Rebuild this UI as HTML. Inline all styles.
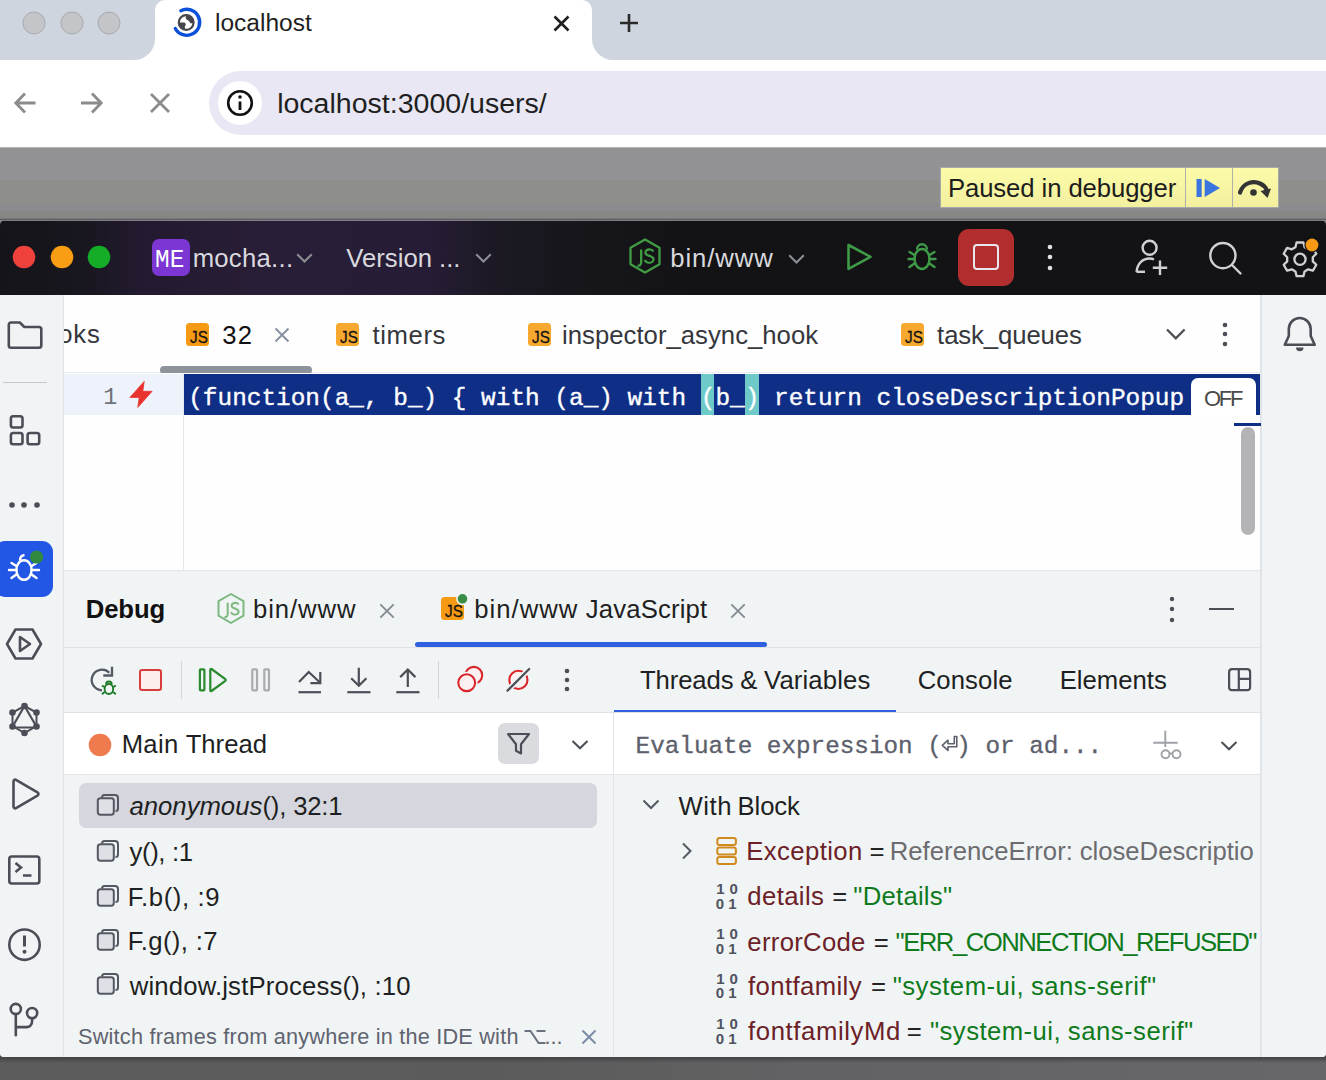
<!DOCTYPE html>
<html><head><meta charset="utf-8"><style>
html,body{margin:0;padding:0;}
body{width:1326px;height:1080px;position:relative;overflow:hidden;background:#4c4c4e;font-family:"Liberation Sans",sans-serif;}
svg{display:block;overflow:visible;}
</style></head><body>
<div style="position:absolute;left:0px;top:0px;width:1326px;height:60px;background:#cfd5de;"></div>
<svg style="position:absolute;left:20.5px;top:10px;" width="26" height="26" viewBox="0 0 26 26" fill="none"><circle cx="13" cy="13" r="11" fill="#c4c5c8" stroke="#a9aaad" stroke-width="1"/></svg>
<svg style="position:absolute;left:58.5px;top:10px;" width="26" height="26" viewBox="0 0 26 26" fill="none"><circle cx="13" cy="13" r="11" fill="#c4c5c8" stroke="#a9aaad" stroke-width="1"/></svg>
<svg style="position:absolute;left:95.6px;top:10px;" width="26" height="26" viewBox="0 0 26 26" fill="none"><circle cx="13" cy="13" r="11" fill="#c4c5c8" stroke="#a9aaad" stroke-width="1"/></svg>
<div style="position:absolute;left:134px;top:38px;width:21px;height:22px;background:#fff;"></div>
<div style="position:absolute;left:134px;top:38px;width:21px;height:22px;background:#cfd5de;border-bottom-right-radius:21px;"></div>
<div style="position:absolute;left:592px;top:38px;width:21px;height:22px;background:#fff;"></div>
<div style="position:absolute;left:592px;top:38px;width:21px;height:22px;background:#cfd5de;border-bottom-left-radius:21px;"></div>
<div style="position:absolute;left:155px;top:0px;width:437px;height:60px;background:#fff;border-radius:10px 10px 0 0;"></div>
<svg style="position:absolute;left:170px;top:6px;" width="34" height="34" viewBox="0 0 34 34" fill="none">
      <path d="M10.88 4.68 A13 13 0 1 1 5.28 22.50" stroke="#0b50d8" stroke-width="3.4" stroke-linecap="round"/>
      <circle cx="16.2" cy="16.5" r="7.4" stroke="#45464b" stroke-width="2.2" fill="#fff"/>
      <path d="M17 9 C15.5 10.5 15 12.5 17 13.8 C18.8 14.8 19.8 15.8 20.3 17.2 L23.8 17.2 A7.6 7.6 0 0 0 17 9Z" fill="#45464b"/>
      <path d="M8.6 16.6 L13.6 16.6 C15.6 16.8 16.2 18.3 15.4 19.6 C14.6 20.8 14.6 22.5 15.6 24 A7.6 7.6 0 0 1 8.6 16.6Z" fill="#45464b"/>
    </svg>
<div style="position:absolute;left:215.01px;top:10.66px;font:normal 400 24.52px/1 'Liberation Sans';color:#1f1f1f;white-space:pre;">localhost</div>
<svg style="position:absolute;left:552px;top:14px;" width="19" height="19" viewBox="0 0 19 19" fill="none"><path d="M2.5 2.5 L16.5 16.5 M16.5 2.5 L2.5 16.5" stroke="#1f1f1f" stroke-width="2.6" stroke-linecap="butt"/></svg>
<svg style="position:absolute;left:618px;top:12px;" width="22" height="22" viewBox="0 0 22 22" fill="none"><path d="M11 2 V20 M2 11 H20" stroke="#2a2a2a" stroke-width="2.6"/></svg>
<div style="position:absolute;left:0px;top:60px;width:1326px;height:87px;background:#ffffff;"></div>
<svg style="position:absolute;left:12px;top:90px;" width="26" height="26" viewBox="0 0 26 26" fill="none"><path d="M23.5 13 H4 M13 3.5 L3.8 13 L13 22.5" stroke="#8b8b8b" stroke-width="2.8" stroke-linejoin="miter"/></svg>
<svg style="position:absolute;left:79px;top:90px;" width="26" height="26" viewBox="0 0 26 26" fill="none"><path d="M2 13 H21.8 M13 3.5 L22.2 13 L13 22.5" stroke="#8b8b8b" stroke-width="2.8" stroke-linejoin="miter"/></svg>
<svg style="position:absolute;left:148px;top:91px;" width="24" height="24" viewBox="0 0 24 24" fill="none"><path d="M3 3 L21 21 M21 3 L3 21" stroke="#8b8b8b" stroke-width="2.8"/></svg>
<div style="position:absolute;left:208.5px;top:71px;width:1200px;height:64px;background:#e8e7f3;border-radius:32px;"></div>
<svg style="position:absolute;left:218px;top:81px;" width="44" height="44" viewBox="0 0 44 44" fill="none"><circle cx="22" cy="22" r="22" fill="#fff"/>
       <circle cx="22" cy="22" r="11.8" stroke="#111" stroke-width="2.6"/>
       <path d="M22 20.5 V29" stroke="#111" stroke-width="2.8"/>
       <circle cx="22" cy="16" r="1.8" fill="#111"/></svg>
<div style="position:absolute;left:277.14px;top:89.44px;font:normal 400 28.54px/1 'Liberation Sans';color:#1f1f1f;white-space:pre;">localhost:3000/users/</div>
<div style="position:absolute;left:0px;top:147px;width:1326px;height:80px;background:linear-gradient(#c8c8ca 0px,#929294 1.5px,#929294 33px,#8e8e8c 33px,#8e8e8c 55.6px,#8c8c8e 55.6px,#8c8c8e 64px,#888886 64px,#868686 71px,#5f5f63 72.5px,#85858a 73.5px);"></div>
<div style="position:absolute;left:0px;top:1050px;width:1326px;height:30px;background:linear-gradient(rgba(60,60,62,1) 0px,rgba(70,70,73,1) 8px,rgba(70,70,73,0) 13px),linear-gradient(90deg,#5c5c5c 0px,#5b5b5b 500px,#626264 800px,#676769 1326px);"></div>
<div style="position:absolute;left:940px;top:167px;width:339px;height:41px;background:linear-gradient(#fbfba8,#f3f0a0);box-sizing:border-box;border:1.5px solid #a8a8a8;"></div>
<div style="position:absolute;left:1184.5px;top:168px;width:1.5px;height:39px;background:#b0b0a8;"></div>
<div style="position:absolute;left:1231.5px;top:168px;width:1.5px;height:39px;background:#b0b0a8;"></div>
<div style="position:absolute;left:947.94px;top:175.96px;font:normal 400 25.70px/1 'Liberation Sans';color:#1d1d1d;white-space:pre;letter-spacing:-0.093px;">Paused in debugger</div>
<svg style="position:absolute;left:1194px;top:176px;" width="30" height="24" viewBox="0 0 30 24" fill="none"><rect x="2.5" y="3" width="5.2" height="18" fill="#3b74dc"/><path d="M10.7 3 L26 12 L10.7 21Z" fill="#3b74dc"/></svg>
<svg style="position:absolute;left:1236px;top:174px;" width="38" height="28" viewBox="0 0 38 28" fill="none"><path d="M4 18.5 C7 9 17 6 24 9.5 C27.5 11 29.5 13.5 30.5 15.5" stroke="#333" stroke-width="4.2" stroke-linecap="round"/>
       <path d="M24.5 17 L35 14.5 L31.5 24Z" fill="#333"/>
       <circle cx="17.5" cy="18.5" r="3.3" fill="#333"/></svg>
<div style="position:absolute;left:0;top:0;width:1326px;height:1080px;clip-path:inset(220.8px 0px 23px 0px round 4px 4px 4px 4px);">
<div style="position:absolute;left:0px;top:220px;width:1326px;height:837px;background:#f1f4f4;"></div>
<div style="position:absolute;left:0px;top:220px;width:1326px;height:75px;background:linear-gradient(90deg,#15141a 0px,#18161e 80px,#231a2f 140px,#291e37 270px,#271c35 430px,#1c1924 490px,#161519 600px,#131316 700px,#131316 1326px);"></div>
<svg style="position:absolute;left:12.3px;top:245.4px;" width="24" height="24" viewBox="0 0 24 24" fill="none"><circle cx="12" cy="12" r="11.3" fill="#f0423d"/></svg>
<svg style="position:absolute;left:50px;top:245.4px;" width="24" height="24" viewBox="0 0 24 24" fill="none"><circle cx="12" cy="12" r="11.3" fill="#f89d14"/></svg>
<svg style="position:absolute;left:87.2px;top:245.4px;" width="24" height="24" viewBox="0 0 24 24" fill="none"><circle cx="12" cy="12" r="11.3" fill="#15ac28"/></svg>
<div style="position:absolute;left:152px;top:238.7px;width:38px;height:37px;background:#7b36d4;border-radius:7px;"></div>
<div style="position:absolute;left:155.27px;top:248.32px;font:normal 400 25.50px/1 'Liberation Mono';color:#ffffff;white-space:pre;transform:scaleX(0.9570);transform-origin:1.53px 0;">ME</div>
<div style="position:absolute;left:192.63px;top:245.85px;font:normal 400 25.70px/1 'Liberation Sans';color:#d8d9de;white-space:pre;letter-spacing:0.279px;">mocha...</div>
<svg style="position:absolute;left:296px;top:252.5px;" width="17" height="10" viewBox="0 0 17 10" fill="none"><path d="M1.2 1.2 L8.5 8.5 L15.8 1.2" stroke="#8c8f96" stroke-width="2"/></svg>
<div style="position:absolute;left:346.27px;top:245.85px;font:normal 400 25.70px/1 'Liberation Sans';color:#d8d9de;white-space:pre;letter-spacing:0.001px;">Version ...</div>
<svg style="position:absolute;left:474.5px;top:252.5px;" width="17" height="10" viewBox="0 0 17 10" fill="none"><path d="M1.2 1.2 L8.5 8.5 L15.8 1.2" stroke="#8c8f96" stroke-width="2"/></svg>
<svg style="position:absolute;left:626px;top:237px;" width="38" height="40" viewBox="0 0 38 40" fill="none"><path d="M19 2.5 L33.5 10.8 V27.2 L19 35.5 L4.5 27.2 V10.8Z" stroke="#3f9c43" stroke-width="2.3" stroke-linejoin="round"/>
      <path d="M15.2 12.5 V25 C15.2 28 13.5 29 11.5 28.5" stroke="#3f9c43" stroke-width="2.3"/>
      <path d="M27.5 14.5 C26.5 12.8 24.5 12.3 22.8 12.5 C20.3 12.8 19.2 14.5 19.6 16.2 C20.1 18.5 23 18.6 25 19.5 C27 20.3 27.8 21.5 27.2 23.5 C26.5 25.6 23.5 26 21.5 25.5 C20 25 19.2 24 18.8 23" stroke="#3f9c43" stroke-width="2.3"/></svg>
<div style="position:absolute;left:670.23px;top:245.55px;font:normal 400 25.70px/1 'Liberation Sans';color:#d8d9de;white-space:pre;letter-spacing:0.921px;">bin/www</div>
<svg style="position:absolute;left:788px;top:253.5px;" width="17" height="10" viewBox="0 0 17 10" fill="none"><path d="M1.2 1.2 L8.5 8.5 L15.8 1.2" stroke="#8c8f96" stroke-width="2"/></svg>
<svg style="position:absolute;left:844px;top:241px;" width="30" height="32" viewBox="0 0 30 32" fill="none"><path d="M4.5 4 L26.5 15.8 L4.5 27.8Z" stroke="#3f9b47" stroke-width="2.6" stroke-linejoin="round"/></svg>
<svg style="position:absolute;left:905px;top:240px;" width="34" height="34" viewBox="0 0 34 34" fill="none"><path d="M12 9.5 C12 6.5 14.3 4.2 17 4.2 C19.7 4.2 22 6.5 22 9.5" stroke="#3f9b47" stroke-width="2.4"/>
      <ellipse cx="17" cy="19" rx="7.5" ry="10" stroke="#3f9b47" stroke-width="2.4"/>
      <path d="M9.5 15 L4.5 12 M24.5 15 L29.5 12 M9.5 19 H3.5 M24.5 19 H30.5 M9.5 23.5 L4.5 27 M24.5 23.5 L29.5 27" stroke="#3f9b47" stroke-width="2.4" stroke-linecap="round"/></svg>
<div style="position:absolute;left:958px;top:229px;width:56px;height:56.5px;background:#b22d2d;border-radius:11px;"></div>
<div style="position:absolute;left:973px;top:244px;width:26px;height:26px;background:transparent;box-sizing:border-box;border:2.4px solid #e8e6ee;border-radius:4px;"></div>
<svg style="position:absolute;left:1046.7px;top:244px;" width="6" height="6" viewBox="0 0 6 6" fill="none"><circle cx="3" cy="3" r="2.3" fill="#dfe1e5"/></svg>
<svg style="position:absolute;left:1046.7px;top:254.39999999999998px;" width="6" height="6" viewBox="0 0 6 6" fill="none"><circle cx="3" cy="3" r="2.3" fill="#dfe1e5"/></svg>
<svg style="position:absolute;left:1046.7px;top:264.6px;" width="6" height="6" viewBox="0 0 6 6" fill="none"><circle cx="3" cy="3" r="2.3" fill="#dfe1e5"/></svg>
<svg style="position:absolute;left:1130px;top:236px;" width="42" height="44" viewBox="0 0 42 44" fill="none"><circle cx="19.6" cy="11.8" r="7" stroke="#cfd1d6" stroke-width="2.4"/>
      <path d="M6.5 35.8 C7.5 27 13 22.5 19.5 22.5 C21.5 22.5 23 23 24 23.5" stroke="#cfd1d6" stroke-width="2.4"/>
      <path d="M6.5 35.8 H15" stroke="#cfd1d6" stroke-width="2.4"/>
      <path d="M30 24.5 V39 M22.8 31.8 H37.2" stroke="#cfd1d6" stroke-width="2.4"/></svg>
<svg style="position:absolute;left:1205px;top:238px;" width="40" height="40" viewBox="0 0 40 40" fill="none"><circle cx="17.9" cy="17.6" r="12.6" stroke="#cfd1d6" stroke-width="2.4"/><path d="M27 27 L35.5 35.5" stroke="#cfd1d6" stroke-width="2.4" stroke-linecap="round"/></svg>
<svg style="position:absolute;left:1280px;top:238px;" width="40" height="40" viewBox="0 0 40 40" fill="none"><path d="M16.6 4.5 H23.4 L24.6 9.2 L28.2 11.3 L32.9 9.9 L36.3 15.8 L32.8 19.2 V23.4 L36.3 26.8 L32.9 32.7 L28.2 31.3 L24.6 33.4 L23.4 38.1 H16.6 L15.4 33.4 L11.8 31.3 L7.1 32.7 L3.7 26.8 L7.2 23.4 V19.2 L3.7 15.8 L7.1 9.9 L11.8 11.3 L15.4 9.2Z" stroke="#cfd1d6" stroke-width="2.3" stroke-linejoin="round"/>
      <circle cx="20" cy="21.3" r="5.6" stroke="#cfd1d6" stroke-width="2.3"/></svg>
<svg style="position:absolute;left:1302px;top:235px;" width="20" height="20" viewBox="0 0 20 20" fill="none"><circle cx="10" cy="10" r="7.6" fill="#131316"/><circle cx="10" cy="10" r="6.4" fill="#f59a12"/></svg>
<div style="position:absolute;left:0px;top:295px;width:63px;height:762px;background:#f1f4f4;"></div>
<div style="position:absolute;left:62.5px;top:295px;width:1.3px;height:762px;background:#e2e2ea;"></div>
<div style="position:absolute;left:1260px;top:295px;width:66px;height:762px;background:#f1f4f4;"></div>
<div style="position:absolute;left:1260px;top:295px;width:1.8px;height:762px;background:#e2e2ea;"></div>
<div style="position:absolute;left:63.5px;top:295px;width:1196.5px;height:78px;background:#fefefe;"></div>
<div style="position:absolute;left:63.5px;top:372px;width:1196.5px;height:1.3px;background:#ebecf0;"></div>
<div style="position:absolute;left:64px;top:295px;width:1196px;height:78px;overflow:hidden;">
<div style="position:absolute;left:-21.03px;top:27.16px;font:normal 400 25.70px/1 'Liberation Sans';color:#35373c;white-space:pre;letter-spacing:0.900px;">ooks</div>
</div>
<div style="position:absolute;left:186px;top:323px;width:22.8px;height:22.8px;background:#f59a12;border-radius:3.5px;"></div>
<div style="position:absolute;left:189.66px;top:330.17px;font:normal 400 15.80px/1 'Liberation Sans';color:#141414;white-space:pre;transform:scaleX(0.9680);transform-origin:0.24px 0;-webkit-text-stroke:0.3px #141414;">JS</div>
<div style="position:absolute;left:222.27px;top:322.96px;font:normal 400 25.70px/1 'Liberation Sans';color:#111;white-space:pre;letter-spacing:1.086px;">32</div>
<svg style="position:absolute;left:271.5px;top:324.5px;" width="20" height="20" viewBox="0 0 20 20" fill="none"><path d="M3.5 3.5 L16.5 16.5 M16.5 3.5 L3.5 16.5" stroke="#8690a0" stroke-width="1.9"/></svg>
<div style="position:absolute;left:336.3px;top:323px;width:22.8px;height:22.8px;background:#f6a92e;border-radius:3.5px;"></div>
<div style="position:absolute;left:339.96px;top:330.17px;font:normal 400 15.80px/1 'Liberation Sans';color:#141414;white-space:pre;transform:scaleX(0.9680);transform-origin:0.24px 0;-webkit-text-stroke:0.3px #141414;">JS</div>
<div style="position:absolute;left:372.61px;top:323.15px;font:normal 400 25.70px/1 'Liberation Sans';color:#35373c;white-space:pre;letter-spacing:0.576px;">timers</div>
<div style="position:absolute;left:528px;top:323px;width:22.8px;height:22.8px;background:#f6a92e;border-radius:3.5px;"></div>
<div style="position:absolute;left:531.66px;top:330.17px;font:normal 400 15.80px/1 'Liberation Sans';color:#141414;white-space:pre;transform:scaleX(0.9680);transform-origin:0.24px 0;-webkit-text-stroke:0.3px #141414;">JS</div>
<div style="position:absolute;left:562.03px;top:323.15px;font:normal 400 25.70px/1 'Liberation Sans';color:#35373c;white-space:pre;letter-spacing:0.024px;">inspector_async_hook</div>
<div style="position:absolute;left:901.3px;top:323px;width:22.8px;height:22.8px;background:#f6a92e;border-radius:3.5px;"></div>
<div style="position:absolute;left:904.96px;top:330.17px;font:normal 400 15.80px/1 'Liberation Sans';color:#141414;white-space:pre;transform:scaleX(0.9680);transform-origin:0.24px 0;-webkit-text-stroke:0.3px #141414;">JS</div>
<div style="position:absolute;left:937.11px;top:323.15px;font:normal 400 25.70px/1 'Liberation Sans';color:#35373c;white-space:pre;letter-spacing:-0.093px;">task_queues</div>
<svg style="position:absolute;left:1164px;top:326px;" width="24" height="16" viewBox="0 0 24 16" fill="none"><path d="M3 3.5 L11.8 12.3 L20.6 3.5" stroke="#4b4e57" stroke-width="2.3"/></svg>
<svg style="position:absolute;left:1219.8px;top:319.9px;" width="10" height="10" viewBox="0 0 10 10" fill="none"><circle cx="5" cy="5" r="2.3" fill="#4b4e57"/></svg>
<svg style="position:absolute;left:1219.8px;top:329.3px;" width="10" height="10" viewBox="0 0 10 10" fill="none"><circle cx="5" cy="5" r="2.3" fill="#4b4e57"/></svg>
<svg style="position:absolute;left:1219.8px;top:338.6px;" width="10" height="10" viewBox="0 0 10 10" fill="none"><circle cx="5" cy="5" r="2.3" fill="#4b4e57"/></svg>
<div style="position:absolute;left:159.5px;top:366px;width:152px;height:7.5px;background:#8e929b;border-radius:4px;"></div>
<div style="position:absolute;left:63.5px;top:373.3px;width:1196.5px;height:197px;background:#fefefe;"></div>
<div style="position:absolute;left:63.5px;top:374px;width:120px;height:40.5px;background:#eef2fb;"></div>
<div style="position:absolute;left:183px;top:374px;width:1.3px;height:196px;background:#e6e7ed;"></div>
<div style="position:absolute;left:63.5px;top:569.5px;width:1196.5px;height:1.3px;background:#e3e5ea;"></div>
<div style="position:absolute;left:103.26px;top:386.14px;font:normal 400 23.50px/1 'Liberation Mono';color:#6f737a;white-space:pre;">1</div>
<svg style="position:absolute;left:128px;top:380px;" width="26" height="29" viewBox="0 0 26 29" fill="none"><path d="M16.2 1.4 L1.9 17.4 H11.2 L9.8 27.4 L24.1 11.3 H14.8Z" fill="#e9332f" stroke="#e9332f" stroke-width="0.8" stroke-linejoin="round"/></svg>
<div style="position:absolute;left:184.3px;top:374px;width:1075.7px;height:40.5px;background:#0f2f87;"></div>
<div style="position:absolute;left:700.9px;top:374px;width:13.5px;height:40.5px;background:#6ecac9;"></div>
<div style="position:absolute;left:744.8px;top:374px;width:14px;height:40.5px;background:#6ecac9;"></div>
<div style="position:absolute;left:184.3px;top:374px;width:1076px;height:41px;overflow:hidden;">
<div style="position:absolute;left:3.90px;top:13.45px;font:normal 400 24.41px/1 'Liberation Mono';color:#ffffff;white-space:pre;-webkit-text-stroke:0.35px #fff;">(function(a_, b_) { with (a_) with (b_) return closeDescriptionPopup</div>
</div>
<div style="position:absolute;left:1191.3px;top:377.7px;width:65.2px;height:37px;background:#ffffff;border-radius:7px 7px 0 0;"></div>
<div style="position:absolute;left:1204.01px;top:387.90px;font:normal 400 22.00px/1 'Liberation Sans';color:#4a4a4a;white-space:pre;letter-spacing:-2.265px;">OFF</div>
<div style="position:absolute;left:1233.5px;top:423px;width:27px;height:3.2px;background:#0f2f87;"></div>
<div style="position:absolute;left:1241px;top:426.5px;width:13.5px;height:108px;background:#b4b4b6;border-radius:7px;"></div>
<svg style="position:absolute;left:4px;top:318px;" width="40" height="33" viewBox="0 0 40 33" fill="none"><path d="M4.8 6.8 C4.8 5.3 5.6 4.5 7.1 4.5 H15.8 L20.3 9 H35 C36.5 9 37.3 9.8 37.3 11.3 V27.5 C37.3 29 36.5 29.8 35 29.8 H7.1 C5.6 29.8 4.8 29 4.8 27.5Z" stroke="#4b4e57" stroke-width="2.6" stroke-linejoin="round"/></svg>
<div style="position:absolute;left:2.5px;top:381.5px;width:44.5px;height:1.8px;background:#c5c8cf;"></div>
<svg style="position:absolute;left:5px;top:410px;" width="40" height="40" viewBox="0 0 40 40" fill="none"><rect x="5.9" y="6.3" width="11.6" height="11.2" rx="2.2" stroke="#4b4e57" stroke-width="2.6"/><rect x="5.9" y="23" width="11.6" height="11.2" rx="2.2" stroke="#4b4e57" stroke-width="2.6"/><rect x="22.6" y="23" width="11.6" height="11.2" rx="2.2" stroke="#4b4e57" stroke-width="2.6"/></svg>
<svg style="position:absolute;left:8px;top:501px;" width="8" height="8" viewBox="0 0 8 8" fill="none"><circle cx="4" cy="4" r="2.8" fill="#4b4e57"/></svg>
<svg style="position:absolute;left:20.3px;top:501px;" width="8" height="8" viewBox="0 0 8 8" fill="none"><circle cx="4" cy="4" r="2.8" fill="#4b4e57"/></svg>
<svg style="position:absolute;left:32.6px;top:501px;" width="8" height="8" viewBox="0 0 8 8" fill="none"><circle cx="4" cy="4" r="2.8" fill="#4b4e57"/></svg>
<div style="position:absolute;left:-6px;top:541px;width:59px;height:56px;background:#2257e6;border-radius:11px;"></div>
<svg style="position:absolute;left:4px;top:548px;" width="40" height="40" viewBox="0 0 40 40" fill="none"><path d="M16 12.5 C16 9.5 17.5 7.3 20.5 7" stroke="#fff" stroke-width="2.4"/>
      <ellipse cx="20" cy="22" rx="7.6" ry="9.8" stroke="#fff" stroke-width="2.4"/>
      <path d="M12.4 18 L7.5 15 M27.6 18 L32.5 15 M12.4 22 H5 M27.6 22 H35 M12.4 26.5 L7.5 30 M27.6 26.5 L32.5 30" stroke="#fff" stroke-width="2.4" stroke-linecap="round"/></svg>
<svg style="position:absolute;left:29px;top:549px;" width="16" height="16" viewBox="0 0 16 16" fill="none"><circle cx="7.6" cy="8" r="6.6" fill="#2f8a3f" stroke="#2257e6" stroke-width="0"/></svg>
<svg style="position:absolute;left:4px;top:624px;" width="40" height="40" viewBox="0 0 40 40" fill="none"><path d="M11.5 5.5 H28.5 L37 20 L28.5 34.5 H11.5 L3 20Z" stroke="#4b4e57" stroke-width="2.6" stroke-linejoin="round"/><path d="M16 13 L26 20 L16 27Z" stroke="#4b4e57" stroke-width="2.6" stroke-linejoin="round"/></svg>
<svg style="position:absolute;left:4px;top:700px;" width="40" height="40" viewBox="0 0 40 40" fill="none"><path d="M20.5 6 L32.5 12.5 V26 L20.5 33 L8.5 26 V12.5Z" stroke="#4b4e57" stroke-width="2"/>
      <path d="M20.5 6 L33 27.5 H8Z" stroke="#4b4e57" stroke-width="2.2" stroke-linejoin="round"/>
      <circle cx="20.5" cy="6" r="3.3" fill="#4b4e57"/><circle cx="32.5" cy="12.5" r="3.3" fill="#4b4e57"/><circle cx="32.5" cy="26.5" r="3.3" fill="#4b4e57"/>
      <circle cx="20.5" cy="33" r="3.3" fill="#4b4e57"/><circle cx="8.5" cy="26.5" r="3.3" fill="#4b4e57"/><circle cx="8.5" cy="12.5" r="3.3" fill="#4b4e57"/></svg>
<svg style="position:absolute;left:4px;top:774px;" width="40" height="40" viewBox="0 0 40 40" fill="none"><path d="M9.5 7.5 C9.5 6 10.8 5.2 12 5.9 L33.5 18.3 C34.8 19.1 34.8 20.9 33.5 21.7 L12 34.1 C10.8 34.8 9.5 34 9.5 32.5Z" stroke="#4b4e57" stroke-width="2.6" stroke-linejoin="round"/></svg>
<svg style="position:absolute;left:4px;top:850px;" width="40" height="40" viewBox="0 0 40 40" fill="none"><rect x="5.3" y="6.5" width="30" height="27" rx="2.5" stroke="#4b4e57" stroke-width="2.6"/><path d="M11.5 13 L17 17.5 L11.5 22 M19 25.5 H27.5" stroke="#4b4e57" stroke-width="2.6"/></svg>
<svg style="position:absolute;left:4px;top:925px;" width="40" height="40" viewBox="0 0 40 40" fill="none"><circle cx="20.5" cy="19.7" r="15.2" stroke="#4b4e57" stroke-width="2.6"/><path d="M20.5 10.5 V21.5" stroke="#4b4e57" stroke-width="3"/><circle cx="20.5" cy="26.8" r="2" fill="#4b4e57"/></svg>
<svg style="position:absolute;left:4px;top:999px;" width="40" height="40" viewBox="0 0 40 40" fill="none"><circle cx="11.8" cy="10" r="5.1" stroke="#4b4e57" stroke-width="2.6"/><circle cx="28.1" cy="14.1" r="5.1" stroke="#4b4e57" stroke-width="2.6"/><path d="M11.8 15.1 V36.3 M11.8 28.1 H22.5 C26 28.1 28.1 25.5 28.1 22 V19.2" stroke="#4b4e57" stroke-width="2.6" stroke-linecap="round"/></svg>
<svg style="position:absolute;left:1280px;top:315px;" width="40" height="42" viewBox="0 0 40 42" fill="none"><path d="M4.8 29.8 L8.8 21 V13.95 A10.95 10.95 0 0 1 30.7 13.95 V21 L34.7 29.8 Z" stroke="#4b4e57" stroke-width="2.6" stroke-linejoin="round"/><path d="M16 32.6 H23.5 A3.75 3.75 0 0 1 16 32.6 Z" fill="#4b4e57"/></svg>
<div style="position:absolute;left:85.73px;top:597.45px;font:normal 700 25.70px/1 'Liberation Sans';color:#111111;white-space:pre;letter-spacing:-0.096px;">Debug</div>
<svg style="position:absolute;left:214px;top:591px;" width="34" height="36" viewBox="0 0 34 36" fill="none"><path d="M17 3 L29.5 10.2 V24.7 L17 32 L4.5 24.7 V10.2Z" stroke="#7cb87f" stroke-width="2" stroke-linejoin="round"/>
      <path d="M13.7 11.8 V22.8 C13.7 25.5 12.3 26.3 10.5 25.8" stroke="#7cb87f" stroke-width="2"/>
      <path d="M24.5 13.6 C23.6 12.1 22 11.7 20.5 11.9 C18.3 12.2 17.3 13.7 17.7 15.2 C18.1 17.2 20.7 17.3 22.4 18.1 C24.2 18.8 24.9 19.9 24.4 21.6 C23.8 23.5 21.1 23.8 19.4 23.4 C18.1 23 17.4 22.1 17 21.2" stroke="#7cb87f" stroke-width="2"/></svg>
<div style="position:absolute;left:252.93px;top:597.45px;font:normal 400 25.70px/1 'Liberation Sans';color:#1e1f22;white-space:pre;letter-spacing:0.921px;">bin/www</div>
<svg style="position:absolute;left:376.5px;top:600.7px;" width="20" height="20" viewBox="0 0 20 20" fill="none"><path d="M3.3 3.3 L16.7 16.7 M16.7 3.3 L3.3 16.7" stroke="#868a94" stroke-width="1.9"/></svg>
<div style="position:absolute;left:441.3px;top:597.3px;width:22.8px;height:22.8px;background:#f59a12;border-radius:3.5px;"></div>
<div style="position:absolute;left:444.96px;top:604.47px;font:normal 400 15.80px/1 'Liberation Sans';color:#141414;white-space:pre;transform:scaleX(0.9680);transform-origin:0.24px 0;-webkit-text-stroke:0.3px #141414;">JS</div>
<svg style="position:absolute;left:454px;top:590px;" width="18" height="18" viewBox="0 0 18 18" fill="none"><circle cx="8.5" cy="8.8" r="5.6" fill="#3a8d46" stroke="#f1f4f4" stroke-width="1.6"/></svg>
<div style="position:absolute;left:474.33px;top:597.45px;font:normal 400 25.70px/1 'Liberation Sans';color:#1e1f22;white-space:pre;letter-spacing:0.987px;">bin/www</div>
<div style="position:absolute;left:585.81px;top:597.45px;font:normal 400 25.70px/1 'Liberation Sans';color:#1e1f22;white-space:pre;letter-spacing:0.158px;">JavaScript</div>
<svg style="position:absolute;left:728.3px;top:600.7px;" width="20" height="20" viewBox="0 0 20 20" fill="none"><path d="M3.3 3.3 L16.7 16.7 M16.7 3.3 L3.3 16.7" stroke="#868a94" stroke-width="1.9"/></svg>
<div style="position:absolute;left:415px;top:642.3px;width:351.5px;height:5.2px;background:#2f60e0;border-radius:3px;"></div>
<div style="position:absolute;left:63.5px;top:646.8px;width:1196.5px;height:1.3px;background:#dfe1e6;"></div>
<svg style="position:absolute;left:1168.7px;top:595.5px;" width="6" height="6" viewBox="0 0 6 6" fill="none"><circle cx="3" cy="3" r="2.2" fill="#4b4e57"/></svg>
<svg style="position:absolute;left:1168.7px;top:606px;" width="6" height="6" viewBox="0 0 6 6" fill="none"><circle cx="3" cy="3" r="2.2" fill="#4b4e57"/></svg>
<svg style="position:absolute;left:1168.7px;top:616.5px;" width="6" height="6" viewBox="0 0 6 6" fill="none"><circle cx="3" cy="3" r="2.2" fill="#4b4e57"/></svg>
<div style="position:absolute;left:1208.5px;top:607.5px;width:25px;height:2px;background:#4b4e57;"></div>
<svg style="position:absolute;left:86px;top:663px;" width="34" height="34" viewBox="0 0 34 34" fill="none"><path d="M23.3 9.7 A10.3 10.3 0 1 0 16 27.3" stroke="#545862" stroke-width="2.3"/>
      <path d="M26 3.8 V12.5 H17.3" stroke="#545862" stroke-width="2.3"/>
      <path d="M20.1 21.3 C20.1 19.6 21.3 18.5 22.9 18.5 C24.5 18.5 25.7 19.6 25.7 21.3" stroke="#1f7a28" stroke-width="1.9"/>
      <ellipse cx="22.9" cy="26" rx="4.3" ry="5" stroke="#1f7a28" stroke-width="1.9"/>
      <path d="M18.6 24 L16 22.6 M27.2 24 L29.8 22.6 M18.6 29 L16 31.2 M27.2 29 L29.8 31.2" stroke="#1f7a28" stroke-width="1.9"/></svg>
<div style="position:absolute;left:139.3px;top:669.3px;width:22.5px;height:21.5px;background:#fdeeee;box-sizing:border-box;border:2.2px solid #da3b3b;border-radius:3px;"></div>
<div style="position:absolute;left:180.5px;top:660.5px;width:1.5px;height:38px;background:#d3d5db;"></div>
<svg style="position:absolute;left:196px;top:666px;" width="34" height="28" viewBox="0 0 34 28" fill="none"><rect x="3.9" y="3.3" width="4.5" height="21" rx="0.8" stroke="#2a8a2e" stroke-width="2.2"/><path d="M14.3 3.6 C14.3 3 15 2.7 15.5 3 L29.3 13.2 C29.8 13.6 29.8 14.4 29.3 14.8 L15.5 25 C15 25.3 14.3 25 14.3 24.4Z" stroke="#2a8a2e" stroke-width="2.2" stroke-linejoin="round"/></svg>
<svg style="position:absolute;left:248px;top:666px;" width="26" height="28" viewBox="0 0 26 28" fill="none"><rect x="4.3" y="3.3" width="4.7" height="21" rx="0.8" stroke="#a9abb1" stroke-width="2.2"/><rect x="16.3" y="3.3" width="4.7" height="21" rx="0.8" stroke="#a9abb1" stroke-width="2.2"/></svg>
<svg style="position:absolute;left:295px;top:666px;" width="30" height="30" viewBox="0 0 30 30" fill="none"><path d="M4 16 L13.7 6 L25 16.5" stroke="#4b4e57" stroke-width="2.2"/><path d="M25.3 6 V17.2 H15.4" stroke="#4b4e57" stroke-width="2.2"/><path d="M3.5 26.2 H26" stroke="#4b4e57" stroke-width="2.2"/></svg>
<svg style="position:absolute;left:344px;top:666px;" width="30" height="30" viewBox="0 0 30 30" fill="none"><path d="M14.8 1.8 V19.8 M7.2 12.2 L14.8 19.8 L22.4 12.2" stroke="#4b4e57" stroke-width="2.2"/><path d="M3.3 26.2 H26.5" stroke="#4b4e57" stroke-width="2.2"/></svg>
<svg style="position:absolute;left:393px;top:666px;" width="30" height="30" viewBox="0 0 30 30" fill="none"><path d="M14.8 21 V3.5 M7.2 11.1 L14.8 3.5 L22.4 11.1" stroke="#4b4e57" stroke-width="2.2"/><path d="M3.3 26.2 H26.5" stroke="#4b4e57" stroke-width="2.2"/></svg>
<div style="position:absolute;left:437.8px;top:660.5px;width:1.5px;height:38px;background:#d3d5db;"></div>
<svg style="position:absolute;left:454px;top:664px;" width="32" height="32" viewBox="0 0 32 32" fill="none"><circle cx="19.8" cy="11.3" r="8.4" fill="#fcf1f0" stroke="#d9262b" stroke-width="2.1"/><circle cx="12.7" cy="18.7" r="10.9" fill="#f1f4f4"/><circle cx="12.7" cy="18.7" r="8.4" fill="#fcf1f0" stroke="#d9262b" stroke-width="2.1"/></svg>
<svg style="position:absolute;left:503px;top:664px;" width="32" height="32" viewBox="0 0 32 32" fill="none"><circle cx="15.4" cy="15.9" r="9.1" fill="#fcf1f0" stroke="#d9262b" stroke-width="2.1"/><path d="M4.5 26.6 L26.2 5" stroke="#f1f4f4" stroke-width="5.5"/><path d="M4.5 26.6 L26.2 5" stroke="#4b4e57" stroke-width="2.2" stroke-linecap="round"/></svg>
<svg style="position:absolute;left:562px;top:665.6px;" width="10" height="10" viewBox="0 0 10 10" fill="none"><circle cx="5" cy="5" r="2.3" fill="#4b4e57"/></svg>
<svg style="position:absolute;left:562px;top:674.9px;" width="10" height="10" viewBox="0 0 10 10" fill="none"><circle cx="5" cy="5" r="2.3" fill="#4b4e57"/></svg>
<svg style="position:absolute;left:562px;top:684.4px;" width="10" height="10" viewBox="0 0 10 10" fill="none"><circle cx="5" cy="5" r="2.3" fill="#4b4e57"/></svg>
<div style="position:absolute;left:639.89px;top:668.15px;font:normal 400 25.70px/1 'Liberation Sans';color:#1e1f22;white-space:pre;letter-spacing:-0.084px;">Threads</div>
<div style="position:absolute;left:740.30px;top:668.15px;font:normal 400 25.70px/1 'Liberation Sans';color:#1e1f22;white-space:pre;">&amp;</div>
<div style="position:absolute;left:764.07px;top:668.15px;font:normal 400 25.70px/1 'Liberation Sans';color:#1e1f22;white-space:pre;letter-spacing:0.123px;">Variables</div>
<div style="position:absolute;left:917.72px;top:668.15px;font:normal 400 25.70px/1 'Liberation Sans';color:#1e1f22;white-space:pre;letter-spacing:0.087px;">Console</div>
<div style="position:absolute;left:1059.74px;top:668.15px;font:normal 400 25.70px/1 'Liberation Sans';color:#1e1f22;white-space:pre;letter-spacing:-0.002px;">Elements</div>
<div style="position:absolute;left:614px;top:709.8px;width:282px;height:3.6px;background:#2f60e0;"></div>
<svg style="position:absolute;left:1225px;top:665px;" width="30" height="30" viewBox="0 0 30 30" fill="none"><rect x="4.1" y="4.2" width="21" height="21" rx="3" stroke="#4b4e57" stroke-width="2.2"/><path d="M13.8 4.2 V25.2 M13.8 13.8 H25.1" stroke="#4b4e57" stroke-width="2.2"/></svg>
<div style="position:absolute;left:63.5px;top:711.8px;width:1196.5px;height:1.3px;background:#dfe1e6;"></div>
<div style="position:absolute;left:63.5px;top:713px;width:549.5px;height:61px;background:#ffffff;"></div>
<div style="position:absolute;left:614px;top:713px;width:646px;height:61px;background:#ffffff;"></div>
<div style="position:absolute;left:63.5px;top:774px;width:1196.5px;height:1.3px;background:#e3e5ea;"></div>
<div style="position:absolute;left:612.8px;top:713px;width:1.3px;height:344px;background:#e3e5ea;"></div>
<svg style="position:absolute;left:87.5px;top:732.5px;" width="24" height="24" viewBox="0 0 24 24" fill="none"><circle cx="12" cy="12" r="11.3" fill="#ef7a4d"/></svg>
<div style="position:absolute;left:121.64px;top:732.36px;font:normal 400 25.70px/1 'Liberation Sans';color:#1e1f22;white-space:pre;letter-spacing:0.295px;">Main</div>
<div style="position:absolute;left:185.69px;top:732.36px;font:normal 400 25.70px/1 'Liberation Sans';color:#1e1f22;white-space:pre;letter-spacing:-0.031px;">Thread</div>
<div style="position:absolute;left:498px;top:723px;width:41px;height:41px;background:#dadbdf;border-radius:7px;"></div>
<svg style="position:absolute;left:503px;top:728px;" width="31" height="31" viewBox="0 0 31 31" fill="none"><path d="M5 6 H26 L18 16.2 V25.5 L13 22.8 V16.2Z" stroke="#4b4e57" stroke-width="2.2" stroke-linejoin="round"/></svg>
<svg style="position:absolute;left:570px;top:738px;" width="20" height="14" viewBox="0 0 20 14" fill="none"><path d="M2.5 3 L10 10.3 L17.5 3" stroke="#4b4e57" stroke-width="2"/></svg>
<div style="position:absolute;left:635.60px;top:735.33px;font:normal 400 24.30px/1 'Liberation Mono';color:#5c606c;white-space:pre;-webkit-text-stroke:0.3px #5c606c;">Evaluate expression (</div>
<svg style="position:absolute;left:940px;top:734.5px;" width="20" height="18" viewBox="0 0 20 18" fill="none"><path d="M14.3 1.5 V8.8 H8 V5.2 L2.3 10.3 L8 15.4 V11.8 H16.8 V1.5Z" stroke="#5c606c" stroke-width="1.6" stroke-linejoin="round"/></svg>
<div style="position:absolute;left:956.36px;top:735.33px;font:normal 400 24.30px/1 'Liberation Mono';color:#5c606c;white-space:pre;-webkit-text-stroke:0.3px #5c606c;">) or ad...</div>
<svg style="position:absolute;left:1150px;top:729px;" width="36" height="34" viewBox="0 0 36 34" fill="none"><path d="M15.3 1.8 V18 M3.2 13.7 H27.7" stroke="#9ea1a8" stroke-width="1.9"/><circle cx="15.5" cy="25.2" r="4" stroke="#9ea1a8" stroke-width="1.9"/><circle cx="26.5" cy="25.2" r="4" stroke="#9ea1a8" stroke-width="1.9"/><path d="M19.5 24.5 H22.5" stroke="#9ea1a8" stroke-width="1.9"/></svg>
<svg style="position:absolute;left:1218.5px;top:739px;" width="20" height="14" viewBox="0 0 20 14" fill="none"><path d="M2.5 3 L10 10.3 L17.5 3" stroke="#4b4e57" stroke-width="2"/></svg>
<div style="position:absolute;left:79px;top:783px;width:518px;height:44.5px;background:#d5d6de;border-radius:7px;"></div>
<svg style="position:absolute;left:95px;top:792px;" width="26" height="26" viewBox="0 0 26 26" fill="none"><rect x="2.8" y="6.2" width="16" height="16.5" rx="2.6" fill="#dfe0e6" stroke="#545862" stroke-width="2"/><path d="M7 5.5 C7 3.8 7.8 3 9.5 3 H20 C22 3 23 4 23 6 V16.5 C23 18 22 19 20.5 19" stroke="#545862" stroke-width="2"/></svg>
<div style="position:absolute;left:129.49px;top:794.15px;font:italic 400 25.70px/1 'Liberation Sans';color:#1e1f22;white-space:pre;">anonymous</div>
<div style="position:absolute;left:262.50px;top:794.15px;font:normal 400 25.70px/1 'Liberation Sans';color:#1e1f22;white-space:pre;letter-spacing:-0.183px;">(), 32:1</div>
<svg style="position:absolute;left:95px;top:838px;" width="26" height="26" viewBox="0 0 26 26" fill="none"><rect x="2.8" y="6.2" width="16" height="16.5" rx="2.6" fill="#dfe0e6" stroke="#545862" stroke-width="2"/><path d="M7 5.5 C7 3.8 7.8 3 9.5 3 H20 C22 3 23 4 23 6 V16.5 C23 18 22 19 20.5 19" stroke="#545862" stroke-width="2"/></svg>
<div style="position:absolute;left:129.57px;top:840.15px;font:normal 400 25.70px/1 'Liberation Sans';color:#1e1f22;white-space:pre;letter-spacing:-0.380px;">y(), :1</div>
<svg style="position:absolute;left:95px;top:882.7px;" width="26" height="26" viewBox="0 0 26 26" fill="none"><rect x="2.8" y="6.2" width="16" height="16.5" rx="2.6" fill="#dfe0e6" stroke="#545862" stroke-width="2"/><path d="M7 5.5 C7 3.8 7.8 3 9.5 3 H20 C22 3 23 4 23 6 V16.5 C23 18 22 19 20.5 19" stroke="#545862" stroke-width="2"/></svg>
<div style="position:absolute;left:127.64px;top:884.86px;font:normal 400 25.70px/1 'Liberation Sans';color:#1e1f22;white-space:pre;letter-spacing:0.599px;">F.b(), :9</div>
<svg style="position:absolute;left:95px;top:927px;" width="26" height="26" viewBox="0 0 26 26" fill="none"><rect x="2.8" y="6.2" width="16" height="16.5" rx="2.6" fill="#dfe0e6" stroke="#545862" stroke-width="2"/><path d="M7 5.5 C7 3.8 7.8 3 9.5 3 H20 C22 3 23 4 23 6 V16.5 C23 18 22 19 20.5 19" stroke="#545862" stroke-width="2"/></svg>
<div style="position:absolute;left:127.64px;top:929.15px;font:normal 400 25.70px/1 'Liberation Sans';color:#1e1f22;white-space:pre;letter-spacing:0.352px;">F.g(), :7</div>
<svg style="position:absolute;left:95px;top:971.4px;" width="26" height="26" viewBox="0 0 26 26" fill="none"><rect x="2.8" y="6.2" width="16" height="16.5" rx="2.6" fill="#dfe0e6" stroke="#545862" stroke-width="2"/><path d="M7 5.5 C7 3.8 7.8 3 9.5 3 H20 C22 3 23 4 23 6 V16.5 C23 18 22 19 20.5 19" stroke="#545862" stroke-width="2"/></svg>
<div style="position:absolute;left:129.70px;top:973.55px;font:normal 400 25.70px/1 'Liberation Sans';color:#1e1f22;white-space:pre;letter-spacing:0.168px;">window.jstProcess(), :10</div>
<div style="position:absolute;left:78.02px;top:1026.36px;font:normal 400 21.70px/1 'Liberation Sans';color:#5f6370;white-space:pre;letter-spacing:0.213px;">Switch frames from anywhere in the IDE with</div>
<svg style="position:absolute;left:523px;top:1028px;" width="24" height="18" viewBox="0 0 24 18" fill="none"><path d="M1.5 3 H7.5 L15.5 15 H22.5 M13.5 3 H22.5" stroke="#6c707e" stroke-width="2"/></svg>
<div style="position:absolute;left:544.55px;top:1026.36px;font:normal 400 21.70px/1 'Liberation Sans';color:#5f6370;white-space:pre;">...</div>
<svg style="position:absolute;left:579px;top:1027px;" width="20" height="20" viewBox="0 0 20 20" fill="none"><path d="M3.5 3.5 L16.5 16.5 M16.5 3.5 L3.5 16.5" stroke="#7a8ba6" stroke-width="1.9"/></svg>
<svg style="position:absolute;left:641px;top:797px;" width="20" height="16" viewBox="0 0 20 16" fill="none"><path d="M2.5 3.5 L10 11 L17.5 3.5" stroke="#545862" stroke-width="2"/></svg>
<div style="position:absolute;left:678.47px;top:794.45px;font:normal 400 25.70px/1 'Liberation Sans';color:#1e1f22;white-space:pre;letter-spacing:0.566px;">With</div>
<div style="position:absolute;left:737.54px;top:794.45px;font:normal 400 25.70px/1 'Liberation Sans';color:#1e1f22;white-space:pre;letter-spacing:-0.095px;">Block</div>
<svg style="position:absolute;left:679px;top:841px;" width="16" height="20" viewBox="0 0 16 20" fill="none"><path d="M4 2.5 L11.5 10 L4 17.5" stroke="#545862" stroke-width="2"/></svg>
<svg style="position:absolute;left:714px;top:835px;" width="26" height="32" viewBox="0 0 26 32" fill="none"><rect x="3.3" y="3" width="18.6" height="7" rx="2.2" stroke="#d18a1e" stroke-width="2"/><rect x="3.3" y="12.5" width="18.6" height="7" rx="2.2" stroke="#d18a1e" stroke-width="2"/><rect x="3.3" y="22" width="18.6" height="7" rx="2.2" stroke="#d18a1e" stroke-width="2"/></svg>
<div style="position:absolute;left:746.34px;top:839.25px;font:normal 400 25.70px/1 'Liberation Sans';color:#6b2127;white-space:pre;letter-spacing:0.400px;">Exception</div>
<div style="position:absolute;left:869.51px;top:839.25px;font:normal 400 25.70px/1 'Liberation Sans';color:#232323;white-space:pre;">=</div>
<div style="position:absolute;left:716.30px;top:881.05px;font:normal 700 15.00px/1 'Liberation Sans';color:#4f5360;white-space:pre;letter-spacing:4.750px;">10</div>
<div style="position:absolute;left:715.70px;top:895.75px;font:normal 700 15.00px/1 'Liberation Sans';color:#4f5360;white-space:pre;letter-spacing:4.225px;">01</div>
<div style="position:absolute;left:747.37px;top:884.25px;font:normal 400 25.70px/1 'Liberation Sans';color:#6b2127;white-space:pre;letter-spacing:0.376px;">details</div>
<div style="position:absolute;left:832.22px;top:884.25px;font:normal 400 25.70px/1 'Liberation Sans';color:#232323;white-space:pre;">=</div>
<div style="position:absolute;left:716.30px;top:926.35px;font:normal 700 15.00px/1 'Liberation Sans';color:#4f5360;white-space:pre;letter-spacing:4.750px;">10</div>
<div style="position:absolute;left:715.70px;top:941.05px;font:normal 700 15.00px/1 'Liberation Sans';color:#4f5360;white-space:pre;letter-spacing:4.225px;">01</div>
<div style="position:absolute;left:747.37px;top:929.55px;font:normal 400 25.70px/1 'Liberation Sans';color:#6b2127;white-space:pre;letter-spacing:0.292px;">errorCode</div>
<div style="position:absolute;left:873.72px;top:929.55px;font:normal 400 25.70px/1 'Liberation Sans';color:#232323;white-space:pre;">=</div>
<div style="position:absolute;left:716.30px;top:970.75px;font:normal 700 15.00px/1 'Liberation Sans';color:#4f5360;white-space:pre;letter-spacing:4.750px;">10</div>
<div style="position:absolute;left:715.70px;top:985.45px;font:normal 700 15.00px/1 'Liberation Sans';color:#4f5360;white-space:pre;letter-spacing:4.225px;">01</div>
<div style="position:absolute;left:748.01px;top:973.95px;font:normal 400 25.70px/1 'Liberation Sans';color:#6b2127;white-space:pre;letter-spacing:0.399px;">fontfamily</div>
<div style="position:absolute;left:870.92px;top:973.95px;font:normal 400 25.70px/1 'Liberation Sans';color:#232323;white-space:pre;">=</div>
<div style="position:absolute;left:716.30px;top:1016.05px;font:normal 700 15.00px/1 'Liberation Sans';color:#4f5360;white-space:pre;letter-spacing:4.750px;">10</div>
<div style="position:absolute;left:715.70px;top:1030.75px;font:normal 700 15.00px/1 'Liberation Sans';color:#4f5360;white-space:pre;letter-spacing:4.225px;">01</div>
<div style="position:absolute;left:748.01px;top:1019.25px;font:normal 400 25.70px/1 'Liberation Sans';color:#6b2127;white-space:pre;letter-spacing:0.606px;">fontfamilyMd</div>
<div style="position:absolute;left:906.72px;top:1019.25px;font:normal 400 25.70px/1 'Liberation Sans';color:#232323;white-space:pre;">=</div>
<div style="position:absolute;left:0;top:0;width:1254px;height:1057px;overflow:hidden;">
<div style="position:absolute;left:889.64px;top:839.25px;font:normal 400 25.70px/1 'Liberation Sans';color:#6c6c70;white-space:pre;letter-spacing:0.039px;">ReferenceError:</div>
<div style="position:absolute;left:1079.67px;top:839.25px;font:normal 400 25.70px/1 'Liberation Sans';color:#6c6c70;white-space:pre;">closeDescription</div>
</div>
<div style="position:absolute;left:853.37px;top:884.25px;font:normal 400 25.70px/1 'Liberation Sans';color:#0f7a1c;white-space:pre;letter-spacing:0.237px;">&quot;Details&quot;</div>
<div style="position:absolute;left:895.57px;top:929.55px;font:normal 400 25.70px/1 'Liberation Sans';color:#0f7a1c;white-space:pre;letter-spacing:-1.505px;">&quot;ERR_CONNECTION_REFUSED&quot;</div>
<div style="position:absolute;left:892.67px;top:973.95px;font:normal 400 25.70px/1 'Liberation Sans';color:#0f7a1c;white-space:pre;letter-spacing:0.483px;">&quot;system-ui,</div>
<div style="position:absolute;left:1031.03px;top:973.95px;font:normal 400 25.70px/1 'Liberation Sans';color:#0f7a1c;white-space:pre;letter-spacing:0.467px;">sans-serif&quot;</div>
<div style="position:absolute;left:929.97px;top:1019.25px;font:normal 400 25.70px/1 'Liberation Sans';color:#0f7a1c;white-space:pre;letter-spacing:0.453px;">&quot;system-ui,</div>
<div style="position:absolute;left:1067.83px;top:1019.25px;font:normal 400 25.70px/1 'Liberation Sans';color:#0f7a1c;white-space:pre;letter-spacing:0.487px;">sans-serif&quot;</div>
</div></body></html>
